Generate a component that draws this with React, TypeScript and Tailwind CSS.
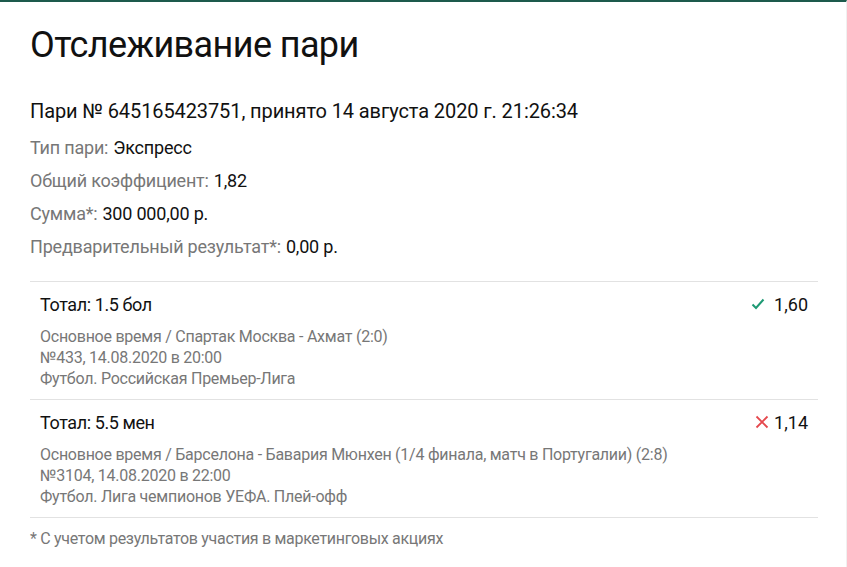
import React from 'react';

interface Selection {
  title: string;
  odds: string;
  won: boolean;
  lines: string[];
}

const selections: Selection[] = [
  {
    title: 'Тотал: 1.5 бол',
    odds: '1,60',
    won: true,
    lines: [
      'Основное время / Спартак Москва - Ахмат (2:0)',
      '№433, 14.08.2020 в 20:00',
      'Футбол. Российская Премьер-Лига',
    ],
  },
  {
    title: 'Тотал: 5.5 мен',
    odds: '1,14',
    won: false,
    lines: [
      'Основное время / Барселона - Бавария Мюнхен (1/4 финала, матч в Португалии) (2:8)',
      '№3104, 14.08.2020 в 22:00',
      'Футбол. Лига чемпионов УЕФА. Плей-офф',
    ],
  },
];

const info: [string, string][] = [
  ['Тип пари:', 'Экспресс'],
  ['Общий коэффициент:', '1,82'],
  ['Сумма*:', '300 000,00 р.'],
  ['Предварительный результат*:', '0,00 р.'],
];

const CheckIcon = () => (
  <svg width="14" height="12" viewBox="0 0 14 12" className="text-[#1e9a74] mr-[9px]">
    <path d="M1.5 6.5 L5 10 L12.5 1.5" fill="none" stroke="currentColor" strokeWidth="2" />
  </svg>
);

const CrossIcon = () => (
  <svg width="14" height="14" viewBox="0 0 14 14" className="text-[#e5484d] mr-[5px]">
    <path d="M1.5 1.5 L12.5 12.5 M12.5 1.5 L1.5 12.5" fill="none" stroke="currentColor" strokeWidth="1.8" />
  </svg>
);

const SelectionRow: React.FC<{ item: Selection }> = ({ item }) => (
  <div className="border-b border-[#e2e2e2] pl-[10px] pr-[10px] pt-[11px] pb-[10px]">
    <div className="flex items-center justify-between h-[22px]">
      <span className="text-[18px] text-[#111] tracking-[-0.4px]">{item.title}</span>
      <span className="flex items-center text-[18px] text-[#111]">
        {item.won ? <CheckIcon /> : <CrossIcon />}
        {item.odds}
      </span>
    </div>
    <div className="mt-[11px] text-[16px] leading-[21px] text-[#777] tracking-[-0.25px]">
      {item.lines.map((l) => (
        <div key={l}>{l}</div>
      ))}
    </div>
  </div>
);

export default function App() {
  return (
    <div
      className="min-h-screen bg-white border-t-2 border-[#1d5a4c] border-r border-r-[#f0f0f0]"
      style={{ fontFamily: 'Roboto, "Liberation Sans", sans-serif' }}
    >
      <div className="pl-[30px] pr-[28px] pt-[19px]">
        <h1 className="text-[36px] leading-[48px] text-[#111] tracking-[-0.6px]">Отслеживание пари</h1>
        <div className="mt-[30px] text-[20px] leading-[24px] text-[#111] tracking-[-0.1px]">
          Пари № 645165423751, принято 14 августа 2020 г. 21:26:34
        </div>
        <div className="mt-[8px] flex flex-col">
          {info.map(([k, v]) => (
            <div key={k} className="h-[33px] flex items-center text-[18px] tracking-[-0.2px]">
              <span className="text-[#777]">{k}</span>
              <span className="ml-[5px] text-[#111]">{v}</span>
            </div>
          ))}
        </div>
        <div className="mt-[18px] border-t border-[#e2e2e2]">
          {selections.map((s) => (
            <SelectionRow key={s.title} item={s} />
          ))}
        </div>
        <div className="mt-[9px] text-[16px] text-[#777] tracking-[-0.3px]">
          * С учетом результатов участия в маркетинговых акциях
        </div>
      </div>
    </div>
  );
}
